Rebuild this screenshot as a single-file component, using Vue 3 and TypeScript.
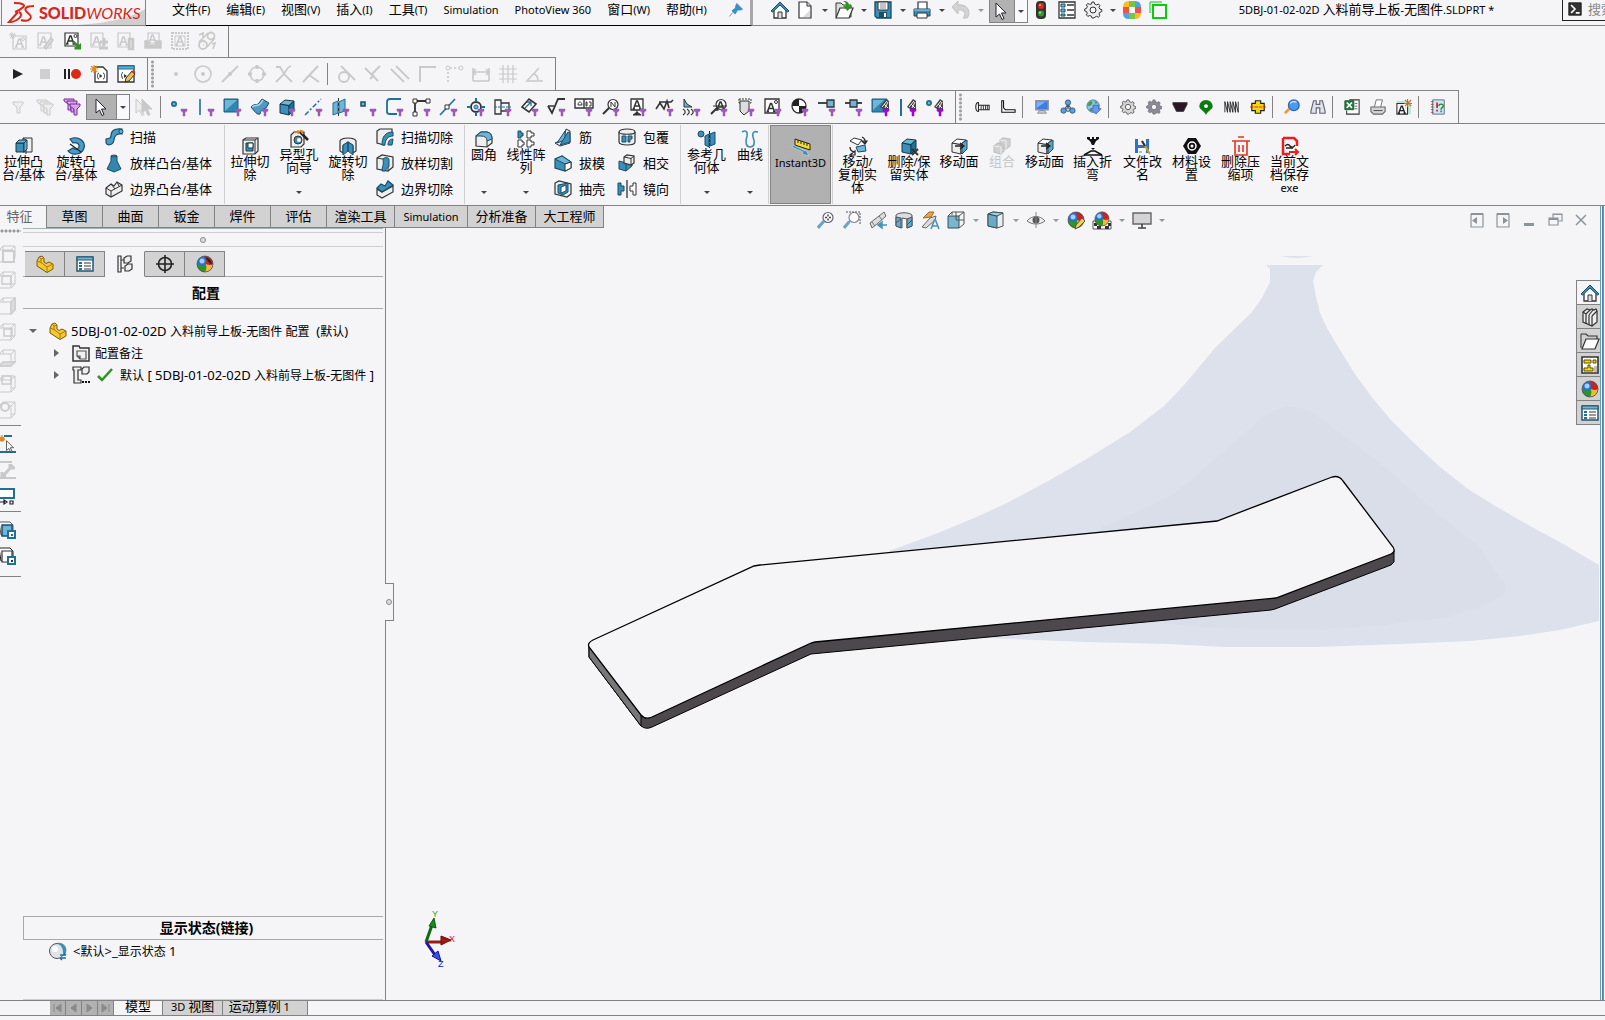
<script setup lang="ts">
import { h, ref } from 'vue'

/* ---------- text with separate Latin and Chinese sizes ---------- */
const Mix = (props: { t: string }) =>
  h(
    'span',
    { class: 'mix' },
    (props.t.match(/[\u3400-\u9fff]+|[^\u3400-\u9fff]+/g) ?? []).map((run) =>
      h('span', { class: /[\u3400-\u9fff]/.test(run) ? 'mix-cjk' : 'mix-lat' }, run),
    ),
  )
Mix.props = ['t']

/* ---------- icon drawing helpers, 18 x 18 grid ---------- */
const D = '#333'
const B = '#1f6f97'
const L = '#6fb5d8'
const G = '#c9c9c9'
const p = (d: string, fill = 'none', stroke = 'none', w = 1) =>
  `<path d="${d}" fill="${fill}" stroke="${stroke}" stroke-width="${w}"/>`
const c = (x: number, y: number, r: number, fill = 'none', stroke = 'none', w = 1) =>
  `<circle cx="${x}" cy="${y}" r="${r}" fill="${fill}" stroke="${stroke}" stroke-width="${w}"/>`
const aMark = (s: string, x = 0, y = 0) =>
  `<g transform="translate(${x} ${y})">` + p('M4 13 7 5h1l3 8M5 10h5M3 13h2.500M9.500 13h2.500', 'none', s, 1.5) + '</g>'
const funnel = p('M11 11h6v2l-2 1v4h-2v-4l-2-1z', '#9b5bb5', '#9b5bb5', 0.5)
const funnelHot = p('M11 11h6v2l-2 1v4h-2v-4l-2-1z', '#a000e0', '#a000e0', 0.5)
const cube = (front: string, top: string, side: string, s: string) =>
  p('M2 6 11 7.500V17L2 15z', front, s) + p('M2 6 7 2 16 3 11 7.500z', top, s) + p('M16 3V12L11 17V7.500z', side, s)
const ball =
  c(9, 9, 8, '#2a6fd6') +
  p('M8 1A8 8 0 0 1 17 9Q14 11 10 9 11 4 8 1z', '#d4201c') +
  p('M17 9A8 8 0 0 1 9 17Q11 13 10 9 14 11 17 9z', '#f0b93c') +
  p('M9 17A8 8 0 0 1 1 9Q5 12 10 9 11 13 9 17z', '#2e9420') +
  c(6, 6, 2.5, '#a5cff5') +
  c(9, 9, 8, 'none', '#555', 0.8)
const cursor = (f: string, s: string) => p('M5 1V15L8.500 12 11 17.500 13 16.500 10.500 11H15z', f, s)
const mesh = p('M8 9 14 1 17 3V11H11z', '#444') + p('M10 9 15 3M13 10 16 4M12 6l4 4', 'none', '#eee', 1)
const glass = (s: string) => c(11, 6.5, 5, '#fff', s, 1.2) + p('M7 10 1 16', 'none', s, 2)
const funnelShape = (s: string, f: string, x = 0, y = 0) =>
  `<g transform="translate(${x} ${y})">` + p('M1 2h10v2L8 7v6H5V7L1 4z', f, s) + '</g>'
const gear = (s: string, f: string) =>
  p('M8 1h2l.6 2 2 .9L14.500 3l1.400 1.500-.9 1.900.8 1.600 2 .6v2l-2 .7-.8 1.700.9 1.800-1.500 1.400-1.800-.9-1.600.7L10 17H8l-.6-1.800-1.700-.7-1.900.9-1.400-1.500.9-1.800L2.500 10.500.7 10V8l1.800-.6.8-1.700-.9-1.900L3.900 2.500l1.800.9L7.400 3z', f, s) +
  c(9, 9, 3, '#f5f5f8', s)
const wire = (extra: string) => p('M1 5V17H13V5zM5 1H17V13H13M5 1 1 5M17 1 13 5M17 13 13 17M5 1V5', 'none', G) + extra
const propList =
  p('M1 2h16v14H1z', '#fff', '#23566f', 1.5) + p('M1 2h16v3H1z', L, '#23566f') +
  p('M3 7h3v2H3zM3 10h3v2H3zM3 13h3v2H3z', B) + p('M8 8h7M8 11h7M8 14h7', 'none', D)
const partIcon =
  p('M1 6V11L11 17.500 17 14V9L13 7 10 8.500 8 7V3L6 1 3 2 1.500 5z', '#f4c92e', '#7a5a10') +
  p('M1 6 5 7.500 11 12V17.500M11 12 17 9M5 7.500V4L8 3M5 4 3 2', 'none', '#a67c14')

const icons: Record<string, string> = {
  // annotation bar
  noteNew: p('M4 4h13v13H4z', 'none', G, 1.2) + aMark(G, 3, 2) + c(14, 7, 1.5, 'none', G) + p('M3 0v7M0 3h7M1 1l5 5M6 1 1 6', 'none', G),
  noteEdit: p('M2 1h13v15H2z', 'none', G, 1.2) + aMark(G) + p('M8 15 15 6l2 2-7 9z', '#ddd', G, 1.5),
  noteA: p('M2 1h13v13H2z', '#fff', D, 1.2) + aMark(D, 0, -1) + c(12.5, 4, 1.5, 'none', D) + p('M9 10l5 5h-2.500v2.500H18V11l-2.500 2-4-4z', '#2e9420'),
  notePlus: p('M1 1h12v14H1z', 'none', G, 1.2) + aMark(G, -1) + p('M10 10h8M14 6v8M9 16h9', 'none', G, 3),
  noteClip: p('M1 1h12v14H1z', 'none', G, 1.2) + aMark(G, -1) + p('M12 7h4v10h-4z', '#ddd', G, 2.5),
  notePrint: p('M4 1h11v10H4z', 'none', G, 1.2) + aMark(G, 1, -2) + p('M1 9h3v4h8V9h5v7H1z', G, G, 1.5),
  noteStamp: `<rect x="1" y="1" width="16" height="16" fill="none" stroke="${G}" stroke-width="2" stroke-dasharray="2 1"/>` + p('M4 4h10v10H4z', 'none', G) + aMark(G, 1.5, 0),
  spline: c(13, 4, 3.500, 'none', G, 1.8) + c(5, 13, 4, 'none', G, 1.800) + p('M10 1 1 10M17 6 9 15M1 3 5 1v4M14 12l3-1-2 6M5 13h1', 'none', G, 1.6),
  // macro bar
  play: p('M4 4 14 9 4 14z', '#222'),
  stop: p('M4 4h10v10H4z', '#cfcfcf'),
  pauseRec: p('M1 4h2v10H1zM5 4h2v10H5z', '#222') + c(13, 9, 5, '#dd2a16'),
  macroNew: p('M5 2h8l4 4v11H5z', '#fff', D, 1.300) + p('M9 8c-2 0-1 3-2 3 1 0 0 3 2 3M13 8c2 0 1 3 2 3-1 0 0 3-2 3', 'none', D) + p('M9.500 9v4l3-2z', D) + p('M4 0v8M0 4h8M1 1l6 6M7 1 1 7', 'none', '#e08a1e', 1.2),
  macroEdit: p('M1 1h16v16H1z', '#fff', D, 1.3) + p('M1 1h16v3H1z', '#5fb0d8', B) + p('M6 7c-1 0-1 3-2 3 1 0 1 4 2 4', 'none', D) + p('M7 9v4l3-2z', D) + p('M8 17 9 13 15 6 18 9 12 16z', '#f4c04a', D) + p('M14.500 7 16 5l2 2-1 2z', '#d22'),
  // sketch relations
  rPoint: c(9, 9, 2, G),
  rCircle: c(9, 9, 8, 'none', G, 1.6) + c(9, 9, 2, G),
  rLine: p('M1 17 17 1', 'none', G, 1.8) + c(9, 9, 2, G),
  rQuad: c(9, 9, 7, 'none', G, 1.6) + p('M9 0v4M9 14v4M0 9h4M14 9h4', 'none', G, 3),
  rCross: p('M1 2H5C7 5 8 7 9 9L17 17M1 17 9 9C11 6 12 2 16 1', 'none', G, 1.8),
  rTri: p('M1 17 16 1M7 10 17 17', 'none', G, 2),
  rTan: c(7, 12, 5, 'none', G, 1.8) + p('M4 1 18 15', 'none', G, 1.8),
  rPerp: p('M1 3 14 16M16 1 7 10M6 14l4-4', 'none', G, 1.8),
  rPar: p('M0 4 13 17M5 1 18 14', 'none', G, 1.8),
  rCorner: p('M2 17V2H18', 'none', G, 2),
  rDots: p('M3 17V3H17', 'none', G, 1.6) .replace('/>', ' stroke-dasharray="2 2"/>') + c(3, 3, 2, '#f5f5f8', G) + c(16, 3, 2, '#f5f5f8', G),
  rDim: p('M1 3v13M17 3v13M1 7h16M4 4 1 7l3 3M14 4l3 3-3 3M1 16h16', 'none', G, 1.600),
  rGrid: p('M0 4h18M0 9h18M0 14h18M4 0v18M9 0v18M14 0v18', 'none', G, 1.2),
  rAngle: p('M17 16H1L13 3M8 9c3 1 4 4 4 7', 'none', G, 1.6),
  // selection filters
  fClear: funnelShape(G, '#eee', 3, 2),
  fAll: funnelShape(G, '#eee', 0, 0) + funnelShape(G, '#eee', 3, 2) + funnelShape(G, '#eee', 6, 4),
  fOn: funnelShape('#7b2a9a', '#d9a5ea', 0, -1) + funnelShape('#7b2a9a', '#d9a5ea', 3, 1) + funnelShape('#7b2a9a', '#d9a5ea', 6, 4),
  cursor: `<g transform="translate(-2 0)">` + cursor('#fff', '#223') + '</g>',
  cursorOff: `<g transform="translate(-4 0)">` + cursor('#eee', G) + '</g>' + `<g transform="translate(2 0)">` + cursor(G, G) + '</g>',
  sPoint: c(4, 6, 3, B) + c(4, 6, 1.2, L) + funnel,
  sLine: p('M3 1V17', 'none', B, 1.6) + funnel,
  sFace: p('M0 1h14v13H0z', '#2e86b2', '#1b5c80') + p('M1 2h12L1 13z', L) + funnel,
  sSurf: p('M0 9C3 5 6 8 8 5L11 1 18 5 15 10C12 11 10 12 9 16 6 17 4 14 0 9z', '#4a9cc6', '#174d6b') + p('M1 9C5 6 7 9 10 5L12 2', 'none', '#a5d4ea', 1.5) + funnel,
  sBody: cube('#3b8fbb', L, '#1f6f97', '#12384d') + funnel,
  sAxis: p('M0 17 16 1', 'none', B, 1.5).replace('/>', ' stroke-dasharray="5 2 2 2"/>') + funnel,
  sPlane: p('M1 5 6 3V15L1 17zM7 4l6-3v12l-6 2z', L, B) + p('M6.500 0v18', 'none', D).replace('/>', ' stroke-dasharray="3 2"/>') + funnel,
  sVertex: p('M2 4h4v4H2z', L, '#174d6b', 1.5) + funnel,
  sSketch: p('M15 1H4Q1 1 1 4V14Q1 16 4 16H11', 'none', B, 1.8) + funnel,
  sSeg: p('M2 3H16M2 3V16', 'none', D, 1.800) + p('M0 1h4v4H0zM13 1h4v4h-4zM0 14h4v4H0z', '#fff', D) + funnel,
  sMid: p('M0 17 15 1', 'none', B, 1.6) + p('M5 7h4v4H5z', '#fff', D) + funnel,
  sCenter: c(9, 9, 5, 'none', D, 1.800) + c(9, 9, 2, L, B) + p('M9 0v4M9 14v4M0 9h4M14 9h4', 'none', B, 2) + funnel,
  sHole: p('M1 2h6v14H1zM7 5h8v8H7', 'none', D, 1.300) + p('M0 9h17', 'none', B).replace('/>', ' stroke-dasharray="3 1"/>') + funnel,
  sDim: p('M1 9 8 1 15 6 8 14z', '#fff', D, 1.600) + p('M4 10 10 4M10 8V4H6', 'none', B, 1.300) + funnel,
  sRough: p('M0 8 4 15 10 1H17', 'none', D, 1.800) + p('M0 8h6', 'none', D, 1.500) + funnel,
  sGdt: p('M0 1h18v9H0zM9 1v9', '#fff', D, 1.400) + p('M3 7c0-4 4-4 4 0zM11 4h1v4h-1zM14 4h2v4h-2', 'none', D) + funnel,
  sBalloon: glass(D) + p('M9 9V4l4 5V4', 'none', D) + funnel,
  sDatum: p('M2 1h12v11H2z', '#fff', D, 1.300) + aMark(D, .5, -2) + p('M8 12v3M4 17l4-3 4 3z', D, D) + funnel,
  sWeld: p('M0 11 4 5 8 11 11 3 13 10M3 4H15L17 2', 'none', D, 1.600) + funnel,
  sWeld2: p('M1 1V9H9L4 6z', L, D) + p('M0 11c3 2 3 4 0 6M4 11c3 2 3 4 0 6M8 11c3 2 3 4 0 6', 'none', D, 1.200) + funnel,
  sDetail: glass(D) + aMark(D, 3, -1) + p('M3 8h14', 'none', D) + funnel,
  sBlock: p('M2 1h12v4H2z', 'none', D).replace('/>', ' stroke-dasharray="2 1"/>') + p('M3 3h9v10l-5 4-4-4z', '#ddd', D) + funnel,
  sTag: p('M1 1h14v14H1z', '#fff', D, 1.300) + aMark(D, -.5, .5) + c(12, 4, 1.5, 'none', D) + funnel,
  sMass: c(8, 8, 7, '#fff', D, 1.3) + p('M8 1A7 7 0 0 0 1 8H8zM8 15A7 7 0 0 0 15 8H8z', '#222') + funnel,
  sRoute: p('M0 5h9', 'none', D, 1.800) + p('M9 2h7v7H9z', L, D, 1.300) + funnel,
  sRoute2: p('M0 5h17', 'none', D, 1.800) + p('M5 2h7v7H5z', L, D, 1.300) + funnel,
  sMeshFace: p('M0 1h15v13H0z', '#2e86b2', '#1b5c80') + p('M1 2h11L1 12z', L) + mesh + funnelHot,
  sMeshEdge: p('M2 1V18', 'none', B, 2) + mesh + funnelHot,
  sMeshPt: c(3, 5, 3, B) + c(3, 5, 1.2, L) + mesh + funnelHot,
  // add-in bar
  screw: p('M5 4C1 3 1 15 5 14zM5 7h12v5H5', '#fff', '#222', 1.200) + p('M8 7v5M10.500 7v5M13 7v5M15 7v5', 'none', '#222'),
  angleBar: p('M2 2V15H17V12H6L4 10V2z', '#fff', '#111', 1.2),
  monitor: p('M2 2h14v10H2z', '#3d7fe0', '#8a96b0', 1.600) + p('M3 3h10L3 10z', '#7fb2f5') + p('M6 13h6l2 3H4z', '#c9c9d6', '#888'),
  network: p('M9 6 4 13M9 6l5 7M9 6v5', 'none', '#456', 1.200) + c(9, 4, 3, '#5aa0e0', '#357') + c(4, 13, 3, '#5aa0e0', '#357') + c(14, 13, 3, '#5aa0e0', '#357') + c(9, 12, 2, '#b6d4f0', '#357'),
  globe: c(8, 8, 7, '#8cc4e8', '#3a79b0') + p('M3 4c3-3 5-1 4 1S3 9 2 7zM9 2l4 2-2 2zM3 11l4 1-1 3z', '#4a9a3c') + p('M8 7h6v4h3l-6 6-6-6h3z', '#6a98f0', '#3b66b8'),
  gear1: gear('#555', '#d6d6d6'),
  gear2: gear('#777', '#8a8a98'),
  pulley: p('M1 4h16v2L13 14H5L1 6z', '#2a1626', '#444'),
  cam: p('M9 1a7.500 7.500 0 0 1 7.500 7.500C16.500 12 11 13 9 18 7 13 1.500 12 1.500 8.500A7.500 7.500 0 0 1 9 1z', '#0c7a10') + c(9, 8, 2.2, '#fff'),
  spring: p('M1 15V3M1 3l3 12V3l3 12V3l3 12V3l3 12V3l3 12V3', 'none', '#222', 1),
  shaft: p('M6 2h6v3h4v8h-4v3H6v-3H2V5h4z', '#f7d514', '#222', 1.300) + p('M0 9h18', 'none', '#d22').replace('/>', ' stroke-dasharray="4 1"/>'),
  search: c(11, 7, 6, '#4a9af0', '#2a66c0', 1.500) + p('M7 5c1-2 5-3 7-1', 'none', '#cfe6ff', 1.500) + p('M6 11 1 16', 'none', '#e0a040', 3),
  binoc: p('M4 2h3v4h4V2h3l3 12v2h-6v-6H7v6H1v-2z', '#dfe3ea', '#667', 1.300),
  excel: p('M6 1h11v16H3v-4', '#fff', '#333', 1.200) + p('M1 2h10v10H1z', '#1e7a3a', '#0e5526') + p('M3 4l6 6M9 4 3 10', 'none', '#fff', 1.800) + p('M12 5h3M12 8h3M12 11h3', 'none', '#555'),
  printer2: p('M5 9 7 1h7l-2 8', '#fff', '#666') + p('M1 9h16v5l-3 3H4l-3-3z', '#d4d4d8', '#666', 1.2) + p('M4 13h10', 'none', '#444'),
  noteStar: p('M1 2h16v15H1z', '#bfe6d4') + p('M1 5h12v12H1z', '#f5f5f8', '#333', 1.200) + aMark('#222', -1, 3) + p('M13 0v9M9 5h9M10 1l7 7M17 1l-7 7', 'none', '#e0601e', 1.200),
  help: p('M3 1h13v16H3z', '#cfe6f5', '#567') + p('M1 3h3M1 6h3M1 9h3M1 12h3M1 15h3', 'none', '#b33') + p('M7 4h2v6H7zM7 12h2v2H7z', '#d22') + p('M10 8c0-3 5-3 5 0 0 2-2.500 1-2.500 4M12.500 13v2', 'none', '#1c8a2c', 1.600),
  // title bar
  pin: p('M10 1 17 8 15 9 11 9 8 14 4 10 8 7 9 3zM5 12 1 17', '#3d8fc2', '#3d8fc2'),
  home: p('M3 9V17H15V9', '#fff', D, 1.300) + p('M7 17v-6h4v6', '#ddd', D) + p('M0 10 9 1l9 9-1.500 1L9 4 1.500 11z', '#3d8fb8', '#134b66'),
  newDoc: p('M3 1h8l4 4v12H3z', '#fff', D, 1.200) + p('M11 1v4h4', '#ddd', D) + p('M14 9v7H7z', '#dcdcdc'),
  open: p('M1 2h5l2 2h8v12H1z', '#ddd', D) + p('M5 7h13L14 17H1z', '#fff', D, 1.200) + p('M8 0c5 0 6 2 6 5h3l-4.500 5L8 5h3c0-2 0-4-3-5z', '#2e9420'),
  save: p('M1 1h16v16H3l-2-2z', '#3d8fb8', '#134b66', 1.300) + p('M4 1h10v8H4z', '#fff', D) + p('M5 11h8v6H5z', '#1c4f6b') + p('M10 12h2v4h-2z', '#fff') + p('M6 3h6M6 5h6M6 7h6', 'none', '#888'),
  print: p('M5 8V1h9v7', '#fff', D, 1.200) + p('M1 8h16v7H1z', '#3d8fb8', '#134b66') + p('M4 12h10v5H4z', '#fff', D) + p('M1 9h16', 'none', '#9fd0e8'),
  undo: p('M0 6 6 0v4c8-1 11 4 11 8 0 2-1 4-2 5h-4c4-4 1-9-5-8v4z', '#d2d2d2', '#c2c2c2'),
  traffic: `<rect x="4" y="0" width="10" height="18" rx="4" fill="#333"/>` + c(9, 5, 3, '#e02a1a') + c(9, 12.500, 3, '#2ea030') + c(8, 4, 1, '#ff9a8a') + c(8, 11.5, 1, '#a5f0a0'),
  options: p('M1 1h16v16H1z', '#fff', D, 1.300) + p('M3 3h4v3H3zM3 8h4v3H3zM3 13h4v2H3z', L, '#174d6b') + p('M9 4h7M9 9h7M9 14h7', 'none', D, 1.300),
  setGear: gear('#333', '#eee'),
  rainbow: p('M6 0h6v6H6zM6 12h6v6H6z', '#7cc14a') + p('M0 6h6v6H0zM12 6h6v6h-6z', '#f0524a') + p('M6 0v6H0Q0 0 6 0zM12 18v-6h6q0 6-6 6z', '#f7c01e') + p('M12 0v6h6q0-6-6-6zM6 18v-6H0q0 6 6 6z', '#4aa5d8') + c(9, 9, 3, '#f5f5f8'),
  greenSq: p('M1 12V1H13', 'none', '#10c810', 1) + p('M4 4h13v13H4z', 'none', '#10c810', 2),
  // features
  extrude: p('M8 1h9v14h-9z', '#eee', D) + p('M8 1 11 3v14', 'none', D) + p('M1 6h8v9H1z', '#3d8fb8', '#12384d') + p('M1 6 4 3h8L9 6zM12 3v9l-3 3V6z', L, '#12384d'),
  revolve: p('M3 2C12 -2 19 5 17 11 15 18 5 19 1 14L6 11C9 14 13 11 12 8 11 6 8 5 6 6z', '#4a9cc6', '#174d6b', 1.200) + p('M3 7 14 15', 'none', '#222', 1.200),
  sweep: p('M1 14C1 18 8 18 9 12 9 8 12 5 17 6V1C9 0 6 3 6 8 6 11 4 10 1 11z', '#4a9cc6', '#174d6b', 1.200) + c(16, 3.5, 2, L, '#174d6b'),
  loft: p('M6 2C7 1 11 1 12 2V7L16 15 9 18 2 15 6 7z', '#3586ae', '#174d6b') + p('M6 2C7 1 11 1 12 2 11 3 7 3 6 2z', '#a5d4ea', '#174d6b'),
  boundary: p('M1 8 6 4 9 6 12 2 17 5V11L6 17 1 14z', '#eee', D, 1.200) + p('M1 8 6 11 17 5M6 11V17M6 4 10 9M12 2 14 6', 'none', D),
  cutExtrude: p('M2 3 5 1H17V14L14 17H2z', '#eee', D, 1.200) + p('M2 3H14V17M14 3 17 1', 'none', D) + p('M5 6h7v8H5z', '#3d8fb8', '#12384d') + p('M7 6h5v5H7z', '#fff', '#12384d'),
  wizard: p('M1 5 4 2H14V14L11 17H1z', '#eee', D, 1.200) + c(8, 10, 4, '#3d8fb8', D) + c(9, 10, 2, '#fff') + p('M10 2 18 10', 'none', '#222', 2.500) + p('M8 0v4M12 0v3M4 1l2 2M10 0l3 4', 'none', '#e08a1e', 1.400),
  cutRevolve: p('M1 4C3 0 15 0 17 4V14L14 16V9L9 5 4 9V16L1 14z', '#eee', D, 1.200) + p('M4 8 9 5V14L4 18zM9 5 14 8V18L9 14z', '#3d8fb8', '#174d6b'),
  cutSweep: p('M1 3 4 1H16V5L8 9V17L1 15z', '#eee', D, 1.200) + p('M17 4C9 4 6 9 6 17H9C9 12 12 8 17 8zM17 11C13 11 12 14 12 17H16z', '#3d8fb8', '#174d6b'),
  cutLoft: p('M1 4 6 1 17 3V13L12 17 1 15z', '#eee', D, 1.200) + p('M1 4 12 6V17', 'none', D) + p('M7 5C9 3 13 3 13 6V12C13 14 10 14 9 17H6C6 12 8 12 7 5z', '#3d8fb8', '#174d6b'),
  cutBoundary: p('M1 9 6 12 17 6V12L6 18 1 15z', '#eee', D, 1.200) + p('M1 8 5 4 9 6 12 1 17 5 6 12z', '#3d8fb8', '#174d6b', 1.200),
  fillet: p('M1 6 6 2 12 2Q17 3 17 9V13L12 17 1 16z', '#eee', D, 1.200) + p('M6 2H12Q17 3 17 9L12 11Q12 6 6 6H1z', L, '#174d6b') + p('M12 11V17', 'none', D),
  pattern: p('M1 1h3v2h2v3H4v2H1z', '#3d8fb8', '#174d6b') + p('M10 1h4v2h3v3h-3v2h-4zM1 10h4v2h2v3H5v2H1zM10 10h4v2h3v3h-3v2h-4z', '#fff', D),
  rib: p('M12 1 16 3V15L6 18 1 15 10 11z', '#eee', D) + p('M11 3V12L3 15z', L, '#174d6b') + p('M14 4 16 5V14L6 17z', '#3d8fb8', '#174d6b'),
  draft: p('M1 5 8 2 17 8V14L11 17 1 14z', '#3d8fb8', '#174d6b', 1.2) + p('M1 5 8 2 17 8 11 10z', L, '#174d6b') + p('M11 10 17 8V14L11 17z', '#fff', D),
  shell: p('M1 3 5 1 17 4V14L13 17 1 14z', '#eee', D, 1.200) + p('M4 5 14 3V12L9 15 4 13z', '#3d8fb8', '#174d6b') + p('M7 7 12 5V11L7 13z', '#fff', '#174d6b'),
  wrap: p('M1 4C1 0 17 0 17 4V14C17 18 1 18 1 14z', '#eee', D, 1.200) + p('M1 4C1 7 17 7 17 4', 'none', D, 1.200) + p('M4 8h4v6H4zM10 8h4v3h-2v3h-2z', '#3d8fb8', '#174d6b'),
  intersect: p('M1 7 8 9V17L1 15zM8 9 14 5V12L8 17', '#3d8fb8', '#174d6b') + p('M6 3 9 1 16 2V9L13 11 6 9z', '#eee', D, 1.200) + p('M6 3 13 4.500V11M13 4.500 16 2', 'none', D),
  mirror: p('M0 3h3v3h3v5H3v4H0z', '#3d8fb8', '#174d6b') + p('M18 3h-3v3h-3v5h3v4h3z', '#fff', D) + p('M9 0V18', 'none', '#222', 1.200),
  refGeom: c(3, 4, 3, '#3d8fb8', '#174d6b') + p('M7 6 11 4V17L7 15zM12 4l5-2v12l-5 2z', '#3d8fb8', '#174d6b') + p('M11.500 1v17', 'none', '#222').replace('/>', ' stroke-dasharray="3 1"/>'),
  curve: p('M1 2C4 0 7 1 6 6 4 12 5 17 9 17 14 17 14 12 12 7 11 2 13 1 17 2', 'none', '#3d8fb8', 1.600),
  instant: p('M3 1 18 6V12L3 7z', '#f7d83a', '#222') + p('M6 2v3M9 3v3M12 4v3M15 5v3', 'none', '#222') + p('M0 9 11 14 10 16 17 18 14 12 13 13 1 7z', '#3d8fb8', '#e8e8e8', .5),
  moveCopy: p('M1 4 5 1 13 3 9 8z', '#fff', D) + p('M7 10 16 8 17 14 9 15z', L, '#174d6b') + p('M13 0q4 2 3 6M18 4l-2 3-3-3zM1 10q0 4 4 5M6 14v4H1z', 'none', '#222', 1.200),
  delBody: cube('#3b8fbb', L, '#1f6f97', '#12384d') + p('M12 12 18 18M18 12 12 18', 'none', '#333', 2),
  moveFace: cube('#eee', '#fff', '#ddd', D) + p('M12 6 17 3V12L12 17z', '#5aa8d0', '#174d6b') + p('M5 9h8M10 6l4 3-4 3', 'none', '#222', 1.300),
  combine: p('M7 3 10 1 17 2V9L13 12 7 10zM1 9 5 6 11 8V14L8 17 1 15z', '#d0d0d0', '#c2c2c2', 1.200) + p('M7 3 13 4V12M1 9 8 10V17', 'none', '#eee'),
  bend: p('M3 0h3v2h2V0h2v2h2V0h3v2l-3 2-2 4H8L6 4 3 2z', '#111') + p('M7 11h4l-2 2z', '#111') + p('M0 18 7 14h4l7 4', 'none', '#111', 1.500) + p('M0 18h18', 'none', '#111', 1.500),
  rename: p('M1 2h3v6h8V2h3v14h-3v-5H4v5H1z', '#2f6fd0') + p('M8 4 16 17', 'none', '#e09a20', 2) + p('M8 4 11 9', 'none', '#333', 2) + p('M5 15h3', 'none', '#bbb', 2),
  material: p('M5 1h8l5 8-5 8H5L0 9z', '#111') + c(9, 9, 4, 'none', '#fff', 1.500) + c(9, 9, 1.500, '#fff'),
  trash: p('M6 0h6M0 4h18M3 4v14h12V4M7 8v7M11 8v7', 'none', '#e3351c', 1.600),
  saveExe: p('M2 1h11l3 3v5M2 1v16h7', 'none', '#ee1c1c', 2.500) + p('M4 9q3-3 5 0 3 3 5-1M5 11h7', 'none', '#222', 1.500) + p('M8 15h9M14 12l3 3-3 3', 'none', '#ee1c1c', 2),
  // view bar
  zoomFit: glass('#667') + p('M11 3.500v2M11 7.500v2M8 6.500h2M12 6.500h2', 'none', '#444', 1.5) + p('M7 10 1 17', 'none', '#6fa5c0', 3),
  zoomArea: glass('#889') + p('M3 1h14v12', 'none', '#555').replace('/>', ' stroke-dasharray="2 1"/>') + p('M6 11 1 17', 'none', '#6fa5c0', 3),
  prevView: p('M1 12 10 5 15 1 17 5 8 13 3 17z', '#ddd', '#666') + p('M3 11l3 4M10 5l3 4', 'none', '#777') + p('M18 14h-6M13 11l-4 3 4 3z', '#4a93b8', '#4a93b8', 1.500),
  section: p('M1 4C4 1 14 1 17 4V15L12 17V8L7 7V17L1 15z', '#ddd', '#555') + p('M1 6 6 7V17L1 15zM12 8 17 6V15L12 17z', '#6aa9c8', '#456') + p('M1 12l5-4M12 14l5-5', 'none', '#456'),
  dynAnno: p('M2 7 8 1h5l-3 5z', '#e8a24a', '#a66a20') + p('M1 16 9 7l6-2-1 4-9 8z', '#ddd', '#666') + p('M10 18 13.500 9h1L18 18M11 15h6', 'none', '#4a93b8', 1.600),
  orient: p('M1 5h11v12H1z', '#7bb5d0', '#355') + p('M1 5 5 1H17V13L12 17M12 5 17 1M5 1v3M9 9h8M9 1v8', 'none', '#555'),
  display: p('M1 3 6 1 16 2V15L10 17 1 15z', '#eee', '#555') + p('M1 3 10 5V17L1 15z', '#6aa9c8', '#355') + p('M1 3 6 1 16 2 10 5z', '#a5d0e2', '#355'),
  eye: p('M0 10C5 4 13 4 18 10 13 14 5 14 0 10z', '#eee', '#777') + c(9, 9, 3.5, '#555') + p('M9 1v16', 'none', '#888'),
  appear: ball + p('M8 18 9 14 15 7 18 10 12 16z', '#f4d04a', '#555'),
  scene: p('M0 10h18v8H0z', '#fff', '#555') + p('M1 12h3v3H1zM4 15h4v3H4zM8 12h4v3H8zM12 15h4v3h-4zM15 12h3v3h-3z', '#333') + '<g transform="translate(1 0) scale(.88)">' + ball + '</g>',
  viewSet: p('M0 2h18v11H0z', '#d4d4d8', '#666', 1.400) + p('M9 13v4M5 17h8', 'none', '#444', 1.600),
  paneL: p('M3 3h12v13H3z', 'none', '#8d9499', 1.200) + p('M3 2h12v2H3z', '#8d9499') + p('M9 6v7L4 9.500z', '#8d9499'),
  paneR: p('M3 3h12v13H3z', 'none', '#8d9499', 1.200) + p('M3 2h12v2H3z', '#8d9499') + p('M9 6v7l5-3.500z', '#8d9499'),
  min: p('M4 12h10v3H4z', '#8d9499'),
  restore: p('M3 7h9v7H3zM7 7V3h9v7h-4', 'none', '#8d9499', 1.200) + p('M3 7h9v2H3zM7 3h9v1H7z', '#8d9499'),
  close: p('M4 4 14 14M14 4 4 14', 'none', '#8d9499', 1.500),
  // task pane
  library: p('M2 4 6 1 9 2 11 1 13 2 15 1 16 3V14L11 18 2 14z', '#eee', D, 1.200) + p('M2 4 5 6V16M5 6 9 2M8 7V17M8 7l4-5M11 8V18M11 8l5-5', 'none', D, 1.2),
  folder: p('M0 2h5l2 2h9v4', '#ccc', D, 1.200) + p('M0 2v14', 'none', D) + p('M5 7h13L14 17H1z', '#fff', D, 1.200),
  palette: p('M1 1h16v16H1z', '#fff', D, 1.600) + p('M3 4h7v3H3zM12 4h3v3h-3zM7 9h2v3h3v3H3v-3h4z', '#f7d514', '#5a4a00') + p('M13 10h3v6h-3z', '#bbb'),
  ball,
  ballMgr: ball + p('M9 2q6 1 7 8-4-3-7-8z', '#222'),
  propList,
  part: partIcon,
  configMgr: p('M2 1h3v16H2zM5 5h3M5 13h3', 'none', D, 1.200) + p('M8 3 11 1h4v5l-3 2H8zM9 11l3-2h4v5l-3 2H9z', '#eee', D, 1.200),
  dimXpert: c(9, 9, 6.500, 'none', '#222', 1.600) + p('M9 0v18M0 9h18', 'none', '#222', 1.600),
  notes: p('M1 2h6l1 2h9v13H1z', '#f0f0f0', D, 1.500) + p('M5 7h9v8H8l-3-3zM5 12h3v3', 'none', '#555', 1.200),
  config: p('M1 1h8v3H6v10h3v3H2V4H1z', '#eee', D, 1.200) + p('M10 3l2-2h5v5l-2 2h-5z', '#eee', D, 1.200) + p('M10 15h2v2h-2zM13 15h2v2h-2zM16 15h2v2h-2z', '#111'),
  check: p('M2 10 6 14 16 3', 'none', '#2e9420', 2.500),
  dispState: c(8, 9, 7.500, '#dfe4e8', '#555', 1) + c(6, 7, 3, '#fff') + p('M8 1C14 0 19 5 17 11L14 11C14 6 12 3 8 1z', '#3d8fb8') + p('M11 13h6M11 16h6M15 11l2 2M13 18l-2-2', 'none', B, 1.400),
  term: p('M1 1h16v16H1z', '#333', '#111') + p('M4 4l5 5-5 5M10 14h5', 'none', '#fff', 2),
  // left rail
  v1: wire(p('M5 6h11v11H5z', '#f5f5f8', '#ccc', 2)),
  v2: wire(p('M4 5h9v8H4z', 'none', '#ccc', 1.500)),
  v3: wire(p('M13 5 17 1V13L13 17z', '#ddd', '#ccc', 1.500)),
  v4: wire(p('M6 6h8v7H6z', 'none', '#ccc', 1.500)),
  v5: wire(p('M1 17 5 13H17L13 17z', '#ddd', '#ccc', 1.500)),
  v6: wire(p('M4 1h9v8H4z', 'none', '#ccc', 1.500)),
  v7: wire(c(7, 6, 4, '#f5f5f8', '#ccc', 2)),
  selSketch: p('M2 17H18M6 1h8', 'none', B, 2) + p('M4 0v7M1 4h6M2 2l4 4M6 2 2 6', 'none', '#e08a1e', 1.300) + `<g transform="translate(5 5) scale(.7)">` + cursor('#fff', '#222') + '</g>',
  wrench: p('M2 1h12M2 17h16', 'none', G, 2) + p('M5 15 15 4M4 11v4h4M12 3v4h5', 'none', G, 3),
  convert: p('M1 2h15v9H1z', '#fff', B, 2) + p('M2 15h5M6 13l3 2-3 2zM12 14h3v3h-3z', 'none', '#222', 1.200),
  layer1: p('M1 1h11l3 3v10H3z', '#fff', '#555') + p('M4 4h10v11H4z', L, '#174d6b', 1.500) + p('M10 10h7v7h-7z', '#fff', B, 2) + p('M13 13h2v2h-2z', B),
  layer2: p('M1 1h11l3 3v10H3z', '#fff', '#222') + p('M4 4h10v11H4z', '#fff', '#333', 1.200) + p('M10 10h7v7h-7z', '#fff', B, 2) + p('M13 13h2v2h-2z', '#333'),
}

const menus = ['文件(F)', '编辑(E)', '视图(V)', '插入(I)', '工具(T)', 'Simulation', 'PhotoView 360', '窗口(W)', '帮助(H)']
const quick = [
  { icon: 'home', w: 28, label: '欢迎' },
  { icon: 'newDoc', w: 22, label: '新建', more: true },
  { icon: 'open', w: 22, label: '打开', more: true },
  { icon: 'save', w: 22, label: '保存', more: true },
  { icon: 'print', w: 22, label: '打印', more: true },
  { icon: 'undo', w: 22, label: '撤消', more: true },
]
const quickAfter = [
  { icon: 'traffic', label: '重建模型' },
  { icon: 'options', label: '文件属性' },
  { icon: 'setGear', label: '选项', more: true },
  { icon: 'rainbow', label: '外观' },
  { icon: 'greenSq', label: '窗口' },
]
const noteBar = ['noteNew', 'noteEdit', 'noteA', 'notePlus', 'noteClip', 'notePrint', 'noteStamp', 'spline']
const macroBar = ['play', 'stop', 'pauseRec', 'macroNew', 'macroEdit']
const relA = ['rPoint', 'rCircle', 'rLine', 'rQuad', 'rCross', 'rTri']
const relB = ['rTan', 'rPerp', 'rPar', 'rCorner', 'rDots', 'rDim', 'rGrid', 'rAngle']
const filterBar = ['sPoint', 'sLine', 'sFace', 'sSurf', 'sBody', 'sAxis', 'sPlane', 'sVertex', 'sSketch', 'sSeg', 'sMid', 'sCenter', 'sHole', 'sDim', 'sRough', 'sGdt', 'sBalloon', 'sDatum', 'sWeld', 'sWeld2', 'sDetail', 'sBlock', 'sTag', 'sMass', 'sRoute', 'sRoute2', 'sMeshFace', 'sMeshEdge', 'sMeshPt']
const addinGroups = [
  ['screw', 'angleBar'],
  ['monitor', 'network', 'globe'],
  ['gear1', 'gear2', 'pulley', 'cam', 'spring', 'shaft'],
  ['search', 'binoc'],
  ['excel', 'printer2', 'noteStar'],
  ['help'],
]

interface Big { w: number; icon: string; text: string; more?: boolean; on?: boolean; off?: boolean }
interface Small { w: number; pad: number; rows: [string, string][] }
const ribbon: (Big | Small)[][] = [
  [
    { w: 47, icon: 'extrude', text: '拉伸凸\n台/基体' },
    { w: 58, icon: 'revolve', text: '旋转凸\n台/基体' },
    { w: 119, pad: 0, rows: [['sweep', '扫描'], ['loft', '放样凸台/基体'], ['boundary', '边界凸台/基体']] },
  ],
  [
    { w: 50, icon: 'cutExtrude', text: '拉伸切\n除' },
    { w: 48, icon: 'wizard', text: '异型孔\n向导', more: true },
    { w: 50, icon: 'cutRevolve', text: '旋转切\n除' },
    { w: 91, pad: 3, rows: [['cutSweep', '扫描切除'], ['cutLoft', '放样切割'], ['cutBoundary', '边界切除']] },
  ],
  [
    { w: 38, icon: 'fillet', text: '圆角', more: true },
    { w: 46, icon: 'pattern', text: '线性阵\n列', more: true },
    { w: 65, pad: 5, rows: [['rib', '筋'], ['draft', '拔模'], ['shell', '抽壳']] },
    { w: 66, pad: 4, rows: [['wrap', '包覆'], ['intersect', '相交'], ['mirror', '镜向']] },
  ],
  [
    { w: 51, icon: 'refGeom', text: '参考几\n何体', more: true },
    { w: 36, icon: 'curve', text: '曲线', more: true },
  ],
  [{ w: 61, icon: 'instant', text: 'Instant3D', on: true }],
  [
    { w: 49, icon: 'moveCopy', text: '移动/\n复制实\n体' },
    { w: 54, icon: 'delBody', text: '删除/保\n留实体' },
    { w: 46, icon: 'moveFace', text: '移动面' },
    { w: 40, icon: 'combine', text: '组合', off: true },
    { w: 45, icon: 'moveFace', text: '移动面' },
    { w: 51, icon: 'bend', text: '插入折\n弯' },
    { w: 49, icon: 'rename', text: '文件改\n名' },
    { w: 49, icon: 'material', text: '材料设\n置' },
    { w: 49, icon: 'trash', text: '删除压\n缩项' },
    { w: 49, icon: 'saveExe', text: '当前文\n档保存\nexe' },
  ],
]
const isSmall = (x: Big | Small): x is Small => 'rows' in x

const tabs = [
  ['特征', 46], ['草图', 56], ['曲面', 56], ['钣金', 56], ['焊件', 56], ['评估', 56],
  ['渲染工具', 68], ['Simulation', 73], ['分析准备', 68], ['大工程师', 69],
] as [string, number][]
const activeTab = ref('特征')

const viewBar = [
  { icon: 'zoomFit' }, { icon: 'zoomArea' }, { icon: 'prevView' }, { icon: 'section' }, { icon: 'dynAnno' },
  { icon: 'orient', more: true }, { icon: 'display', more: true }, { icon: 'eye', more: true },
  { icon: 'appear' }, { icon: 'scene', more: true }, { icon: 'viewSet', more: true },
]
const winBtns = ['paneL', 'paneR', 'min', 'restore', 'close']
const rail = [['v1', 'v2', 'v3', 'v4', 'v5', 'v6', 'v7'], ['selSketch', 'wrench', 'convert'], ['layer1', 'layer2']]
const panelTabs = ['part', 'propList', 'configMgr', 'dimXpert', 'ballMgr']
const taskPane = ['home', 'library', 'folder', 'palette', 'ball', 'propList']
const docTabs = ['模型', '3D 视图', '运动算例 1']
const navs = ['M4 3v8M11 3v8L6 7z', 'M10 3v8L5 7z', 'M5 3v8l5-4z', 'M4 3v8l5-4zM11 3v8']
</script>

<template>
  <div class="app">
    <header class="titlebar">
      <div class="logo">
        <svg class="swoosh" width="68" height="16" viewBox="0 0 68 16" aria-hidden="true"><path d="M0 16Q48 13 68 0V16z" fill="#cfcfcf" /></svg>
        <svg width="28" height="22" viewBox="0 0 28 22" aria-hidden="true">
          <path d="M7 1C15 1 20 3 15 6 13 8 11 9 8 10M11 10 2 20C10 20 18 13 12 10M27 4C20 4 17 6 19 9 21 12 26 13 23 17 21 19 17 19 14 18" fill="none" stroke="#d9261c" stroke-width="2" />
        </svg>
        <span class="brand"><b>SOLID</b><i>WORKS</i></span>
      </div>
      <nav class="menus">
        <button v-for="m in menus" :key="m"><Mix :t="m" /></button>
        <button class="pin" aria-label="固定"><svg class="ic" viewBox="-2 -2 22 22" v-html="icons.pin" /></button>
      </nav>
      <div class="quick">
        <template v-for="q in quick" :key="q.icon">
          <button class="qb" :style="{ width: q.w + 'px' }" :aria-label="q.label"><svg class="ic" viewBox="0 0 18 18" v-html="icons[q.icon]" /></button>
          <button v-if="q.more" class="qa" :class="{ dim: q.icon === 'undo' }" aria-label="更多"></button>
        </template>
        <button class="sel" aria-label="选择"><svg class="ic" viewBox="0 0 18 18" v-html="icons.cursor" /></button>
        <button class="drop" aria-label="选择方式"></button>
        <template v-for="q in quickAfter" :key="q.icon">
          <button class="qc" :aria-label="q.label"><svg class="ic" viewBox="0 0 18 18" v-html="icons[q.icon]" /></button>
          <button v-if="q.more" class="qd" aria-label="更多"></button>
        </template>
      </div>
      <h1 class="doc"><Mix t="5DBJ-01-02-02D 入料前导上板-无图件.SLDPRT *" /></h1>
      <label class="search">
        <svg width="14" height="14" viewBox="0 0 18 18" v-html="icons.term" />
        <input type="search" placeholder="搜索命令" aria-label="搜索命令" />
      </label>
    </header>

    <div class="bar notes">
      <button v-for="i in noteBar" :key="i" class="tb" :aria-label="i"><svg class="ic" viewBox="0 0 18 18" v-html="icons[i]" /></button>
    </div>

    <div class="bar macro">
      <button v-for="i in macroBar" :key="i" class="tb" :aria-label="i"><svg class="ic" viewBox="0 0 18 18" v-html="icons[i]" /></button>
      <span class="edge"></span><span class="grip"></span>
      <button v-for="i in relA" :key="i" class="tb" :aria-label="i"><svg class="ic" viewBox="0 0 18 18" v-html="icons[i]" /></button>
      <span class="sep"></span>
      <button v-for="i in relB" :key="i" class="tb" :aria-label="i"><svg class="ic" viewBox="0 0 18 18" v-html="icons[i]" /></button>
    </div>

    <div class="bar filter">
      <button v-for="i in ['fClear', 'fAll', 'fOn']" :key="i" class="tb" :aria-label="i"><svg class="ic" viewBox="0 0 18 18" v-html="icons[i]" /></button>
      <button class="sel big" aria-label="选择"><svg class="ic" viewBox="0 0 18 18" v-html="icons.cursor" /></button>
      <button class="drop" aria-label="选择方式"></button>
      <button class="tb" aria-label="反选"><svg class="ic" viewBox="0 0 18 18" v-html="icons.cursorOff" /></button>
      <span class="sep"></span>
      <button v-for="i in filterBar" :key="i" class="tb" :aria-label="i"><svg class="ic" viewBox="0 0 18 18" v-html="icons[i]" /></button>
      <span class="edge"></span><span class="grip"></span>
      <div v-for="(g, n) in addinGroups" :key="n" class="addin">
        <button v-for="i in g" :key="i" class="ab" :aria-label="i"><svg width="16" height="16" viewBox="0 0 18 18" v-html="icons[i]" /></button>
      </div>
    </div>

    <div class="ribbon">
      <div v-for="(g, n) in ribbon" :key="n" class="group">
        <template v-for="(item, k) in g" :key="k">
          <div v-if="isSmall(item)" class="smalls" :style="{ width: item.w + 'px', paddingLeft: item.pad + 'px' }">
            <button v-for="r in item.rows" :key="r[1]">
              <svg class="ic" viewBox="0 0 18 18" v-html="icons[r[0]]" /><Mix :t="r[1]" />
            </button>
          </div>
          <button v-else class="bigbtn" :class="{ more: item.more, on: item.on, off: item.off }" :style="{ width: item.w + 'px' }">
            <svg class="ic" viewBox="0 0 18 18" v-html="icons[item.icon]" />
            <Mix :t="item.text" />
            <span v-if="item.more" class="tri"></span>
          </button>
        </template>
      </div>
    </div>

    <div class="work">
      <div class="tabs" role="tablist">
        <button v-for="[t, w] in tabs" :key="t" role="tab" :aria-selected="t === activeTab" :style="{ width: w + 'px' }" @click="activeTab = t"><Mix :t="t" /></button>
      </div>

      <main class="main">
        <div class="rail">
          <span class="hgrip"></span>
          <div v-for="(g, n) in rail" :key="n" class="rgroup">
            <button v-for="i in g" :key="i" :aria-label="i"><svg width="16" height="18" viewBox="2 0 16 18" v-html="icons[i]" /></button>
          </div>
        </div>

        <aside class="panel">
          <div class="topstrip"><span class="dot"></span></div>
          <div class="ptabs" role="tablist">
            <button v-for="(i, n) in panelTabs" :key="i" role="tab" :aria-selected="n === 2" :aria-label="i"><svg class="ic" viewBox="0 0 18 18" v-html="icons[i]" /></button>
          </div>
          <h2>配置</h2>
          <ul class="tree">
            <li class="l0"><span class="open"></span><svg class="ic" viewBox="0 0 18 18" v-html="icons.part" /><Mix t="5DBJ-01-02-02D 入料前导上板-无图件 配置  (默认)" /></li>
            <li class="l1"><span class="shut"></span><svg class="ic" viewBox="0 0 18 18" v-html="icons.notes" /><Mix t="配置备注" /></li>
            <li class="l1"><span class="shut"></span><svg class="ic" viewBox="0 0 18 18" v-html="icons.config" /><svg class="ic tick" viewBox="0 0 18 18" v-html="icons.check" /><Mix t="默认 [ 5DBJ-01-02-02D 入料前导上板-无图件 ]" /></li>
          </ul>
          <section class="states">
            <h3>显示状态(链接)</h3>
            <p><svg class="ic" viewBox="0 0 18 18" v-html="icons.dispState" /><Mix t="<默认>_显示状态 1" /></p>
          </section>
          <button class="splitter" aria-label="折叠面板"><span class="dot"></span></button>
        </aside>

        <section class="view">
          <svg class="scene" viewBox="386 228 1214 772" preserveAspectRatio="xMinYMin meet" role="img" aria-label="零件">
            <path d="M1281 256h31q-15 4-31 0z" fill="#dde1eb" />
            <path d="M1266 265H1323L1316 272 1313 281 1316 297 1320 313 1328 330 1340 350 1355 374 1371 396 1390 419 1412 441 1440 467 1468 489 1497 507 1530 526 1565 545 1599 565V621L1560 630 1520 636 1470 641 1400 644 1317 647H1224L1170 644 1085 642 988 638 900 600 889 551 938 533 974 518 1007 503 1048 481 1085 460 1130 432 1164 406 1184 385 1215 348 1252 312 1262 298 1270 282V269z" fill="#dde1eb" />
            <path d="M1287 407Q1300 407 1310 411L1325 421 1352 442 1385 467 1430 507 1480 548 1500 578Q1512 589 1498 598L1477 608 1445 618 1385 625 1318 630H1258L1202 627 1150 622 1080 560 1102 527 1145 508 1175 493 1205 468 1232 445 1262 417 1277 409z" fill="#dadee8" />
            <path d="M589 645V657L641 726Q646 730 652 727L811 654 1271 610 1275 609 1391 565 1394 562V550L1276 590 815 630 640 700z" fill="#4d484e" stroke="#000" stroke-width="1" />
            <path d="M589 645V657L641 726V714z" fill="#777" stroke="#000" />
            <path d="M593 640 754 566 760 565 1217 521 1332 477Q1339 475 1343 481L1393 547Q1396 552 1391 554L1276 598 815 642 811 643 652 717Q645 720 641 715L589 647Q587 643 593 640z" fill="#f5f5f8" stroke="#000" stroke-width="1.300" />
            <g class="triad">
              <path d="M426 942 432 925" stroke="#0a6a10" stroke-width="3" />
              <path d="M429 926 434 918 436 928z" fill="#1c8a1c" stroke="#0a5a10" />
              <path d="M427 942H444" stroke="#a01818" stroke-width="3" />
              <path d="M441 936 451 940 441 945z" fill="#a01818" stroke="#6a0c0c" />
              <path d="M426 942 435 955" stroke="#1818a8" stroke-width="3" />
              <path d="M432 956 438 951 441 961z" fill="#3a50e0" stroke="#1010a0" />
              <text x="432" y="917" fill="#3aa020">Y</text>
              <text x="449" y="942" fill="#f01010">X</text>
              <text x="438" y="967" fill="#1010e0">Z</text>
            </g>
          </svg>
          <div class="taskpane">
            <button v-for="(i, n) in taskPane" :key="i" :class="{ cur: n === 0 }" :aria-label="i"><svg class="ic" viewBox="0 0 18 18" v-html="icons[i]" /></button>
          </div>
        </section>
        <div class="rim"></div>
      </main>
      <div class="viewbar">
        <template v-for="v in viewBar" :key="v.icon">
          <button class="vb" :aria-label="v.icon"><svg class="ic" viewBox="0 0 18 18" v-html="icons[v.icon]" /></button>
          <button v-if="v.more" class="va" aria-label="更多"></button>
        </template>
      </div>
      <div class="winbtns">
        <button v-for="i in winBtns" :key="i" :aria-label="i"><svg class="ic" viewBox="0 0 18 18" v-html="icons[i]" /></button>
      </div>
    </div>

    <footer class="foot">
      <div class="navs">
        <button v-for="(d, n) in navs" :key="n" aria-label="滚动"><svg width="15" height="14" viewBox="0 0 15 14"><path :d="d" fill="#8a8a8a" stroke="#8a8a8a" /></svg></button>
      </div>
      <button v-for="(t, n) in docTabs" :key="t" class="dt" :class="{ cur: n === 0 }"><Mix :t="t" /></button>
    </footer>
  </div>
</template>

<style>
body { background: #f5f5f8; overflow: hidden; }
.mix { white-space: pre; }
.mix-cjk { font-size: var(--cjk, 13px); }
.mix-lat { font-size: var(--lat, 11px); }
</style>

<style scoped>
* { box-sizing: border-box; }
.app {
  display: flex; flex-direction: column; height: 100vh; padding-bottom: 4px;
  background: #f5f5f8; color: #000;
  font: 13px/13px "Noto Sans", "Noto Sans CJK SC", sans-serif;
}
button {
  display: flex; align-items: center; justify-content: center; flex: none;
  margin: 0; padding: 0; border: 0; border-radius: 0; background: none;
  color: inherit; font: inherit; text-align: center;
}
h1, h2, h3, p, ul { margin: 0; padding: 0; font-size: 13px; font-weight: 400; }
.ic { width: 18px; height: 18px; flex: none; display: block; overflow: visible; }

/* title bar */
.titlebar { display: flex; height: 26px; flex: none; border-bottom: 1px solid #828282; padding-left: 1px; }
.logo {
  position: relative; display: flex; align-items: center; gap: 4px; width: 145px; flex: none; padding-left: 5px;
  border-left: 1px solid #828282; border-right: 1px solid #828282;
}
.swoosh { position: absolute; right: 0; bottom: 0; }
.brand { position: relative; color: #d9261c; font: 16px/22px Lato, sans-serif; white-space: nowrap; }
.brand b { font-weight: 900; }
.menus {
  display: flex; align-items: flex-start; gap: 16px; width: 607px; flex: none; height: 26px; padding-left: 26px;
  border-bottom: 1px solid #000; border-right: 3px solid #a8a8a8;
}
.menus button { height: 19px; white-space: nowrap; }
.menus .pin { margin-left: auto; margin-right: 5px; }
.quick { display: flex; flex: none; padding-left: 13px; }
.quick button { height: 20px; }
.quick .qc { width: 26px; }
.quick .sel, .quick .drop { height: 23px; border-top: 0; }
.qa, .qd { width: 17px; }
.quick .qd { width: 13px; }
.qa::after, .qd::after, .drop::after, .tri, .va::after {
  content: ""; border: 3px solid transparent; border-top-color: #444; border-bottom: 0;
}
.qa.dim::after { border-top-color: #999; }
.sel { width: 26px; background: #b1b1b1; border: 1px solid #828282; }
.drop { width: 13px; border: 1px solid #828282; border-left: 0; background: #f9f9fb; }
.doc { flex: 1; text-align: center; line-height: 18px; white-space: nowrap; }
.search {
  display: flex; align-items: center; gap: 6px; width: 43px; height: 21px; flex: none; padding: 0 0 3px 5px; overflow: hidden;
  border: solid #222; border-width: 0 0 1px 1px;
}
.search svg { flex: none; }
.search input { width: 80px; flex: none; padding: 0; border: 0; outline: 0; background: none; font: 13px/16px "Noto Sans CJK SC", sans-serif; }
.search input::placeholder { color: #888; }

/* toolbars */
.bar { display: flex; align-items: center; align-self: flex-start; flex: none; padding-left: 4px; border-right: 1px solid #828282; }
.bar.notes { height: 31px; width: 229px; padding-bottom: 1px; }
.bar.macro { height: 33px; border-top: 1px solid #828282; padding-right: 7px; }
.bar.filter { height: 33px; border-top: 1px solid #828282; }
.tb { width: 27px; height: 28px; }
.bar .sel { width: 31px; height: 26px; margin-left: 1px; }
.bar .drop { height: 26px; }
.sep { width: 1px; height: 22px; margin: 0 4px 0 3px; background: #828282; }
.edge { width: 1px; align-self: stretch; margin-left: 8px; background: #828282; }
.grip { width: 3px; height: 28px; margin: 0 8px 0 3px; background: radial-gradient(circle, #a0a0a0 1px, transparent 2px) 0 0 / 3px 4px; }
.filter .edge { margin-left: 7px; }
.filter .grip { margin-right: 7px; }
.addin { display: flex; padding-right: 1px; }
.addin + .addin { border-left: 1px solid #828282; padding-left: 6px; }
.addin:last-child { padding-right: 7px; }
.ab { width: 26px; height: 22px; }

/* ribbon */
.ribbon { display: flex; height: 82px; flex: none; border-top: 1px solid #828282; }
.group { display: flex; }
.group + .group::before { content: ""; width: 1px; margin: 1px 0; background: #cfcfcf; }
.bigbtn { flex-direction: column; justify-content: flex-start; padding: 13px 0 11px; }
.bigbtn.more { padding-top: 6px; }
.bigbtn.on { margin: 1px; background: #b1b1b1; border: 1px solid #828282; padding-top: 12px; }
.bigbtn.off { color: #c6c6c6; }
.tri { margin-top: auto; }
.smalls { display: flex; flex-direction: column; }
.smalls button { justify-content: flex-start; height: 26px; gap: 7px; white-space: nowrap; }

/* command tabs */
.work { position: relative; display: flex; flex-direction: column; flex: 1; min-height: 0; }
.tabs { display: flex; flex: none; height: 23px; border-top: 1px solid #828282; }
.tabs button { background: #d2d2d2; border: solid #828282; border-width: 0 0 1px 1px; padding-bottom: 1px; white-space: nowrap; }
.tabs button:last-child { border-right-width: 1px; }
.tabs button[aria-selected="true"] { background: none; border-color: transparent; color: #666; padding-right: 8px; }
.viewbar { position: absolute; top: 5px; left: 813px; display: flex; }
.vb { width: 26px; height: 20px; }
.va { width: 14px; }
.va::after { border-top-color: #8a9aa0; }
.winbtns { position: absolute; top: 5px; right: 11px; display: flex; }
.winbtns button { width: 26px; height: 20px; }

/* work area */
.main { display: flex; flex: 1; min-height: 0; }
.rail { width: 21px; flex: none; margin-right: 2px; }
.hgrip { display: block; height: 13px; background: radial-gradient(circle, #999 1px, transparent 2px) 0 0 / 4px 6px repeat-x; }
.rgroup { border-bottom: 1px solid #828282; padding-bottom: 2px; }
.rgroup + .rgroup { padding: 5px 0 2px; }
.rgroup:last-child { padding-bottom: 7px; }
.rail button { width: 16px; height: 26px; }
.panel { position: relative; display: flex; flex-direction: column; width: 363px; flex: none; padding-right: 2px; border-right: 1px solid #828282; }
.topstrip {
  display: flex; align-items: center; justify-content: center; height: 19px; flex: none; padding-top: 5px;
  border-top: 1px solid #9fb2b6; border-bottom: 1px solid #cfcfcf;
  background: linear-gradient(#cfcfcf, #cfcfcf) 0 3px / 100% 1px no-repeat;
}
.dot { width: 6px; height: 6px; flex: none; border: 1px solid #888; border-radius: 50%; background: #ddd; }
.ptabs { display: flex; height: 30px; flex: none; padding: 4px 0 0 2px; border-bottom: 1px solid #a8a8a8; }
.ptabs button { width: 40px; height: 26px; background: #d2d2d2; border: solid #828282; border-width: 1px 1px 1px 0; }
.ptabs button[aria-selected="true"] { background: #f5f5f8; border-color: transparent #828282 transparent transparent; }
.panel h2, .panel h3 { font-size: 14px; font-weight: 700; text-align: center; flex: none; padding-left: 6px; }
.panel h2 { height: 32px; line-height: 32px; border-bottom: 1px solid #a8a8a8; }
.tree { --cjk: 12px; --lat: 13px; list-style: none; padding-top: 11px; flex: 1; overflow: hidden; }
.tree li { display: flex; align-items: center; height: 22px; gap: 5px; white-space: nowrap; }
.tree .l0 { padding-left: 6px; gap: 4px; }
.tree .l1 { padding-left: 31px; }
.open { width: 0; margin-right: 8px; border: 4px solid transparent; border-top-color: #666; border-bottom: 0; }
.shut { width: 0; margin-right: 8px; border: 4px solid transparent; border-left: 5px solid #666; border-right: 0; }
.tree .tick { margin: 0 1px; }
.states { --cjk: 12px; --lat: 13px; height: 84px; flex: none; border-bottom: 1px solid #cfcfcf; }
.states h3 { height: 24px; line-height: 22px; border: 1px solid #a8a8a8; border-right: 0; }
.states p { display: flex; align-items: center; gap: 6px; height: 22px; padding-left: 26px; }
.splitter {
  position: absolute; left: 362px; top: 355px; width: 9px; height: 38px; z-index: 1;
  background: #f5f5f8; border: 1px solid #828282; border-left: 0;
}
.view { position: relative; flex: 1; min-width: 0; overflow: hidden; }
.scene { display: block; width: 100%; height: 100%; }
.triad { fill: none; font: 9px "Liberation Sans", sans-serif; }
.taskpane { position: absolute; right: -3px; top: 52px; }
.taskpane button { width: 27px; height: 24px; background: #d2d2d2; border: 1px solid #828282; border-bottom: 0; }
.taskpane button:last-child { height: 25px; border-bottom: 1px solid #828282; }
.taskpane .cur { background: #f5f5f8; }
.rim { width: 5px; flex: none; margin-top: -22px; background: linear-gradient(90deg, #6a9ab4 1px, #fff 1px 2px, #4d88a8 2px 3px, #8a8a8a 3px 4px, #f5f5f8 4px); }

/* model tabs */
.foot { display: flex; height: 16px; flex: none; padding-left: 50px; border-bottom: 1px solid #828282; border-top: 1px solid #828282; }
.navs { display: flex; width: 64px; background: #b1b1b1; }
.navs button { width: 16px; height: 14px; border-right: 1px solid #828282; }
.dt { height: 14px; padding: 0 8px 4px; background: #d2d2d2; border-right: 1px solid #828282; }
.dt.cur { width: 49px; background: #f5f5f8; }
.dt:last-child { width: 85px; padding-right: 20px; }
</style>
